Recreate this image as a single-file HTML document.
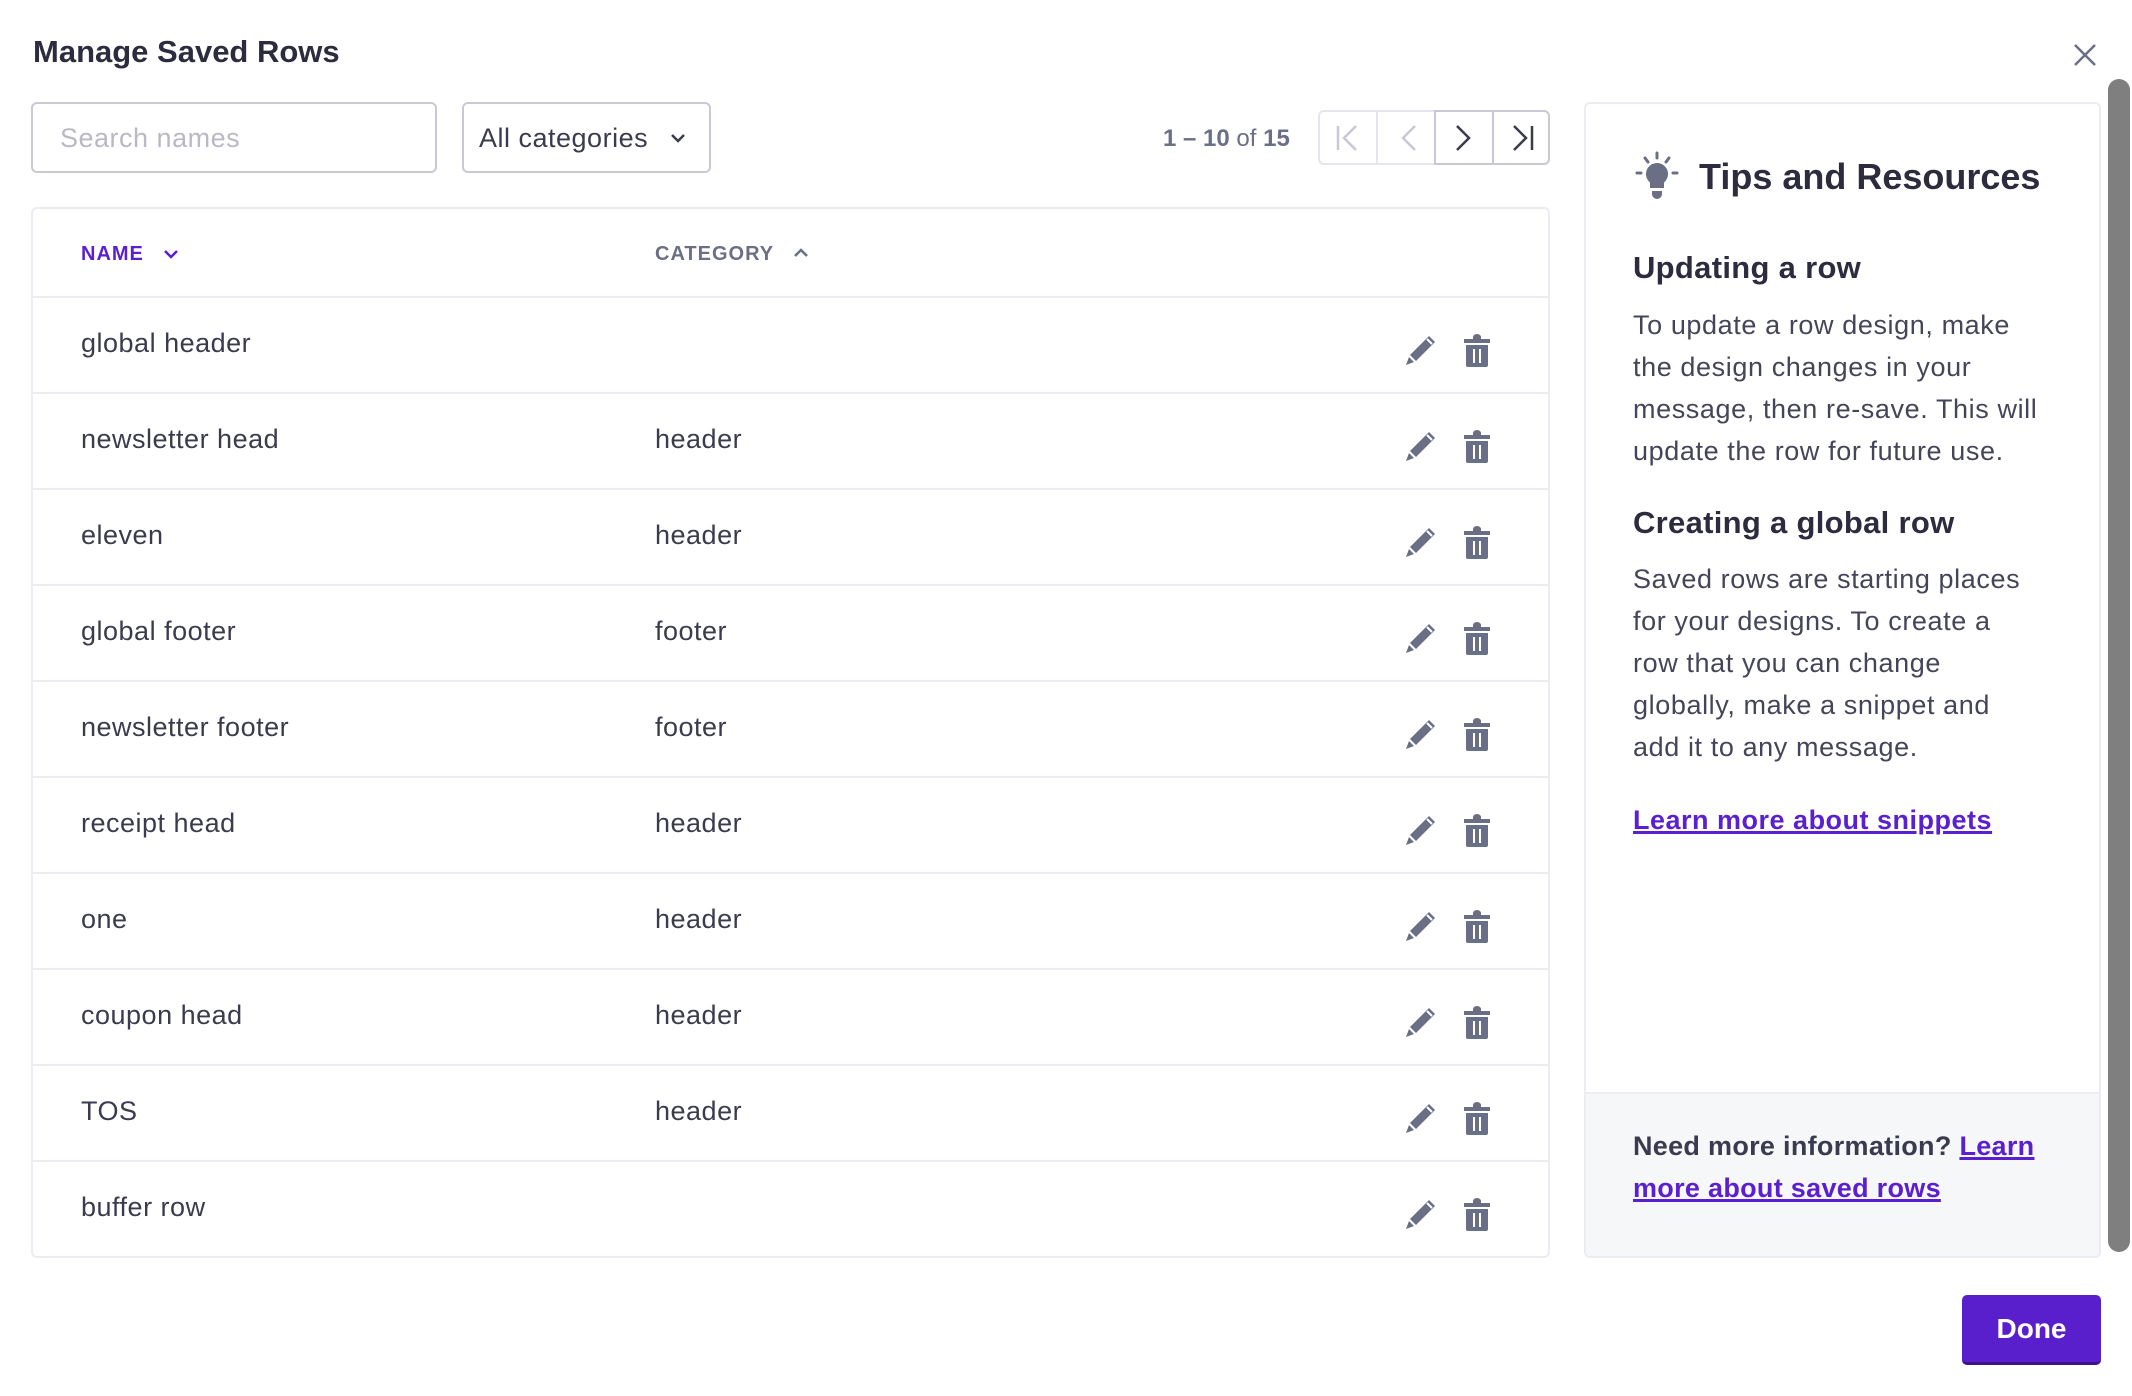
<!DOCTYPE html>
<html><head><meta charset="utf-8"><style>
*{box-sizing:border-box;margin:0;padding:0}
body{width:2132px;height:1396px;background:#fff;font-family:"Liberation Sans",sans-serif;color:#3b3b4f;position:relative;overflow:hidden}
.a{position:absolute}
.t{font-size:31px;font-weight:bold;color:#2c2c3e;left:33px;top:34px}
.box{border:2px solid #c9c8d6;border-radius:6px}
.tbl{left:31px;top:207px;width:1519px;height:1051px;border:2px solid #ececf2;border-radius:6px}
.row{position:absolute;left:0;width:1515px;height:96px;border-top:2px solid #ececf2;font-size:27px;letter-spacing:.5px;color:#3b3b4f}
.row .n{position:absolute;left:48px;top:30px}
.row .c{position:absolute;left:622px;top:30px}
.row svg{position:absolute;top:36px}
.p{font-size:27px;line-height:42px;letter-spacing:.6px;color:#45455a;white-space:nowrap}
h3{font-size:31px;font-weight:bold;color:#2c2c3e;letter-spacing:.3px}
a{color:#5a1fd1;text-decoration:underline;text-decoration-thickness:3px;font-weight:bold}
</style></head><body>
<div class="a t">Manage Saved Rows</div>
<svg class="a" style="left:2072px;top:42px" width="26" height="26" viewBox="0 0 26 26"><path d="M3 3L23 23M23 3L3 23" stroke="#6b6f85" stroke-width="2.5"/></svg>
<div class="a box" style="left:31px;top:102px;width:406px;height:71px"></div>
<div class="a" style="left:60px;top:123px;font-size:27px;color:#b9b9c6;letter-spacing:.5px">Search names</div>
<div class="a box" style="left:462px;top:102px;width:249px;height:71px"></div>
<div class="a" style="left:479px;top:123px;font-size:27px;color:#3b3b4f;letter-spacing:.5px">All categories</div>
<svg class="a" style="left:670px;top:132px" width="16" height="12" viewBox="0 0 16 12"><path d="M2 3L8 9L14 3" fill="none" stroke="#3b3b4f" stroke-width="2.5"/></svg>
<div class="a" style="left:1163px;top:125px;font-size:24px;color:#6b6f85;font-weight:bold">1 – 10 <span style="font-weight:normal">of</span> 15</div>
<div class="a" style="left:1318px;top:110px;width:232px;height:55px;border:2px solid #e6e5ee;border-radius:6px"></div>
<div class="a" style="left:1434px;top:110px;width:116px;height:55px;border:2px solid #c9c8d6;border-radius:0 6px 6px 0"></div>
<div class="a" style="left:1376px;top:112px;width:2px;height:51px;background:#e6e5ee"></div>
<div class="a" style="left:1492px;top:112px;width:2px;height:51px;background:#c9c8d6"></div>
<svg class="a" style="left:1318px;top:110px" width="232" height="55" viewBox="0 0 232 55"><g fill="none" stroke-width="2.5"><path d="M20 16V40M38 16L26 28L38 40" stroke="#c9c8d6"/><path d="M97 16L85 28L97 40" stroke="#c9c8d6"/><path d="M139 16L151 28L139 40" stroke="#3b3b4f"/><path d="M196 16L208 28L196 40M214 16V40" stroke="#3b3b4f"/></g></svg>
<div class="a tbl">
<div class="a" style="left:48px;top:34px;font-size:20px;font-weight:bold;color:#5a1fd1;letter-spacing:1px">NAME</div>
<svg class="a" style="left:130px;top:39px" width="16" height="12"><path d="M2 3L8 9L14 3" fill="none" stroke="#5a1fd1" stroke-width="2.5"/></svg>
<div class="a" style="left:622px;top:34px;font-size:20px;font-weight:bold;color:#6b6f85;letter-spacing:1px">CATEGORY</div>
<svg class="a" style="left:760px;top:38px" width="16" height="12"><path d="M2 9L8 3L14 9" fill="none" stroke="#6b6f85" stroke-width="2.5"/></svg>
<div class="row" style="top:87px"><span class="n">global header</span><span class="c"></span><svg style="left:1372px" width="34" height="34" viewBox="0 0 34 34"><path d="M24 2l6 6-19 19-6-6z" fill="#6b6f85"/><path d="M22 5l5 5" stroke="#fff" stroke-width="2"/><path d="M4 23l5 5-8 3z" fill="#6b6f85"/></svg><svg style="left:1430px" width="30" height="34" viewBox="0 0 30 34"><path d="M10 3a4 3 0 0 1 8 0v2h9v4H1V5h9z" fill="#6b6f85"/><path d="M3 11h22v20a2 2 0 0 1-2 2H5a2 2 0 0 1-2-2z" fill="#6b6f85"/><path d="M11 15v14M17 15v14" stroke="#fff" stroke-width="2"/></svg></div>
<div class="row" style="top:183px"><span class="n">newsletter head</span><span class="c">header</span><svg style="left:1372px" width="34" height="34" viewBox="0 0 34 34"><path d="M24 2l6 6-19 19-6-6z" fill="#6b6f85"/><path d="M22 5l5 5" stroke="#fff" stroke-width="2"/><path d="M4 23l5 5-8 3z" fill="#6b6f85"/></svg><svg style="left:1430px" width="30" height="34" viewBox="0 0 30 34"><path d="M10 3a4 3 0 0 1 8 0v2h9v4H1V5h9z" fill="#6b6f85"/><path d="M3 11h22v20a2 2 0 0 1-2 2H5a2 2 0 0 1-2-2z" fill="#6b6f85"/><path d="M11 15v14M17 15v14" stroke="#fff" stroke-width="2"/></svg></div>
<div class="row" style="top:279px"><span class="n">eleven</span><span class="c">header</span><svg style="left:1372px" width="34" height="34" viewBox="0 0 34 34"><path d="M24 2l6 6-19 19-6-6z" fill="#6b6f85"/><path d="M22 5l5 5" stroke="#fff" stroke-width="2"/><path d="M4 23l5 5-8 3z" fill="#6b6f85"/></svg><svg style="left:1430px" width="30" height="34" viewBox="0 0 30 34"><path d="M10 3a4 3 0 0 1 8 0v2h9v4H1V5h9z" fill="#6b6f85"/><path d="M3 11h22v20a2 2 0 0 1-2 2H5a2 2 0 0 1-2-2z" fill="#6b6f85"/><path d="M11 15v14M17 15v14" stroke="#fff" stroke-width="2"/></svg></div>
<div class="row" style="top:375px"><span class="n">global footer</span><span class="c">footer</span><svg style="left:1372px" width="34" height="34" viewBox="0 0 34 34"><path d="M24 2l6 6-19 19-6-6z" fill="#6b6f85"/><path d="M22 5l5 5" stroke="#fff" stroke-width="2"/><path d="M4 23l5 5-8 3z" fill="#6b6f85"/></svg><svg style="left:1430px" width="30" height="34" viewBox="0 0 30 34"><path d="M10 3a4 3 0 0 1 8 0v2h9v4H1V5h9z" fill="#6b6f85"/><path d="M3 11h22v20a2 2 0 0 1-2 2H5a2 2 0 0 1-2-2z" fill="#6b6f85"/><path d="M11 15v14M17 15v14" stroke="#fff" stroke-width="2"/></svg></div>
<div class="row" style="top:471px"><span class="n">newsletter footer</span><span class="c">footer</span><svg style="left:1372px" width="34" height="34" viewBox="0 0 34 34"><path d="M24 2l6 6-19 19-6-6z" fill="#6b6f85"/><path d="M22 5l5 5" stroke="#fff" stroke-width="2"/><path d="M4 23l5 5-8 3z" fill="#6b6f85"/></svg><svg style="left:1430px" width="30" height="34" viewBox="0 0 30 34"><path d="M10 3a4 3 0 0 1 8 0v2h9v4H1V5h9z" fill="#6b6f85"/><path d="M3 11h22v20a2 2 0 0 1-2 2H5a2 2 0 0 1-2-2z" fill="#6b6f85"/><path d="M11 15v14M17 15v14" stroke="#fff" stroke-width="2"/></svg></div>
<div class="row" style="top:567px"><span class="n">receipt head</span><span class="c">header</span><svg style="left:1372px" width="34" height="34" viewBox="0 0 34 34"><path d="M24 2l6 6-19 19-6-6z" fill="#6b6f85"/><path d="M22 5l5 5" stroke="#fff" stroke-width="2"/><path d="M4 23l5 5-8 3z" fill="#6b6f85"/></svg><svg style="left:1430px" width="30" height="34" viewBox="0 0 30 34"><path d="M10 3a4 3 0 0 1 8 0v2h9v4H1V5h9z" fill="#6b6f85"/><path d="M3 11h22v20a2 2 0 0 1-2 2H5a2 2 0 0 1-2-2z" fill="#6b6f85"/><path d="M11 15v14M17 15v14" stroke="#fff" stroke-width="2"/></svg></div>
<div class="row" style="top:663px"><span class="n">one</span><span class="c">header</span><svg style="left:1372px" width="34" height="34" viewBox="0 0 34 34"><path d="M24 2l6 6-19 19-6-6z" fill="#6b6f85"/><path d="M22 5l5 5" stroke="#fff" stroke-width="2"/><path d="M4 23l5 5-8 3z" fill="#6b6f85"/></svg><svg style="left:1430px" width="30" height="34" viewBox="0 0 30 34"><path d="M10 3a4 3 0 0 1 8 0v2h9v4H1V5h9z" fill="#6b6f85"/><path d="M3 11h22v20a2 2 0 0 1-2 2H5a2 2 0 0 1-2-2z" fill="#6b6f85"/><path d="M11 15v14M17 15v14" stroke="#fff" stroke-width="2"/></svg></div>
<div class="row" style="top:759px"><span class="n">coupon head</span><span class="c">header</span><svg style="left:1372px" width="34" height="34" viewBox="0 0 34 34"><path d="M24 2l6 6-19 19-6-6z" fill="#6b6f85"/><path d="M22 5l5 5" stroke="#fff" stroke-width="2"/><path d="M4 23l5 5-8 3z" fill="#6b6f85"/></svg><svg style="left:1430px" width="30" height="34" viewBox="0 0 30 34"><path d="M10 3a4 3 0 0 1 8 0v2h9v4H1V5h9z" fill="#6b6f85"/><path d="M3 11h22v20a2 2 0 0 1-2 2H5a2 2 0 0 1-2-2z" fill="#6b6f85"/><path d="M11 15v14M17 15v14" stroke="#fff" stroke-width="2"/></svg></div>
<div class="row" style="top:855px"><span class="n">TOS</span><span class="c">header</span><svg style="left:1372px" width="34" height="34" viewBox="0 0 34 34"><path d="M24 2l6 6-19 19-6-6z" fill="#6b6f85"/><path d="M22 5l5 5" stroke="#fff" stroke-width="2"/><path d="M4 23l5 5-8 3z" fill="#6b6f85"/></svg><svg style="left:1430px" width="30" height="34" viewBox="0 0 30 34"><path d="M10 3a4 3 0 0 1 8 0v2h9v4H1V5h9z" fill="#6b6f85"/><path d="M3 11h22v20a2 2 0 0 1-2 2H5a2 2 0 0 1-2-2z" fill="#6b6f85"/><path d="M11 15v14M17 15v14" stroke="#fff" stroke-width="2"/></svg></div>
<div class="row" style="top:951px"><span class="n">buffer row</span><span class="c"></span><svg style="left:1372px" width="34" height="34" viewBox="0 0 34 34"><path d="M24 2l6 6-19 19-6-6z" fill="#6b6f85"/><path d="M22 5l5 5" stroke="#fff" stroke-width="2"/><path d="M4 23l5 5-8 3z" fill="#6b6f85"/></svg><svg style="left:1430px" width="30" height="34" viewBox="0 0 30 34"><path d="M10 3a4 3 0 0 1 8 0v2h9v4H1V5h9z" fill="#6b6f85"/><path d="M3 11h22v20a2 2 0 0 1-2 2H5a2 2 0 0 1-2-2z" fill="#6b6f85"/><path d="M11 15v14M17 15v14" stroke="#fff" stroke-width="2"/></svg></div>
</div>
<div class="a" style="left:1584px;top:102px;width:517px;height:1156px;border:2px solid #ececf2;border-radius:6px;overflow:hidden">
<div class="a" style="left:0;top:988px;width:517px;height:170px;background:#f6f7f9;border-top:2px solid #ececf2"></div>
</div>
<svg class="a" style="left:1632px;top:150px" width="52" height="54" viewBox="0 0 52 54"><g stroke="#6b6f85" stroke-width="3" stroke-linecap="round"><path d="M25 3V8M13 8L16 12M37 8L34 12M5 23H9M41 23H45"/></g><path d="M25 13a11 11 0 0 0-7 19.5V38h14v-5.5A11 11 0 0 0 25 13z" fill="#6b6f85"/><path d="M20 41h10v3a5 5 0 0 1-10 0z" fill="#6b6f85"/></svg>
<div class="a" style="left:1699px;top:156px;font-size:36px;font-weight:bold;color:#2c2c3e">Tips and Resources</div>
<h3 class="a" style="left:1633px;top:250px">Updating a row</h3>
<div class="a p" style="left:1633px;top:304px">To update a row design, make<br>the design changes in your<br>message, then re-save. This will<br>update the row for future use.</div>
<h3 class="a" style="left:1633px;top:505px">Creating a global row</h3>
<div class="a p" style="left:1633px;top:558px">Saved rows are starting places<br>for your designs. To create a<br>row that you can change<br>globally, make a snippet and<br>add it to any message.</div>
<div class="a" style="left:1633px;top:805px;font-size:27px;letter-spacing:.5px"><a>Learn more about snippets</a></div>
<div class="a" style="left:1633px;top:1125px;font-size:27px;line-height:42px;font-weight:bold;color:#3b3b4f;letter-spacing:.3px;white-space:nowrap">Need more information? <a>Learn</a><br><a>more about saved rows</a></div>
<div class="a" style="left:2108px;top:79px;width:22px;height:1173px;background:#7f7f7f;border-radius:11px"></div>
<div class="a" style="left:1962px;top:1295px;width:139px;height:70px;background:#5a1fcc;border-radius:5px;border-bottom:3px solid #3a1290;color:#fff;font-size:28px;font-weight:bold;text-align:center;line-height:68px">Done</div>
</body></html>
